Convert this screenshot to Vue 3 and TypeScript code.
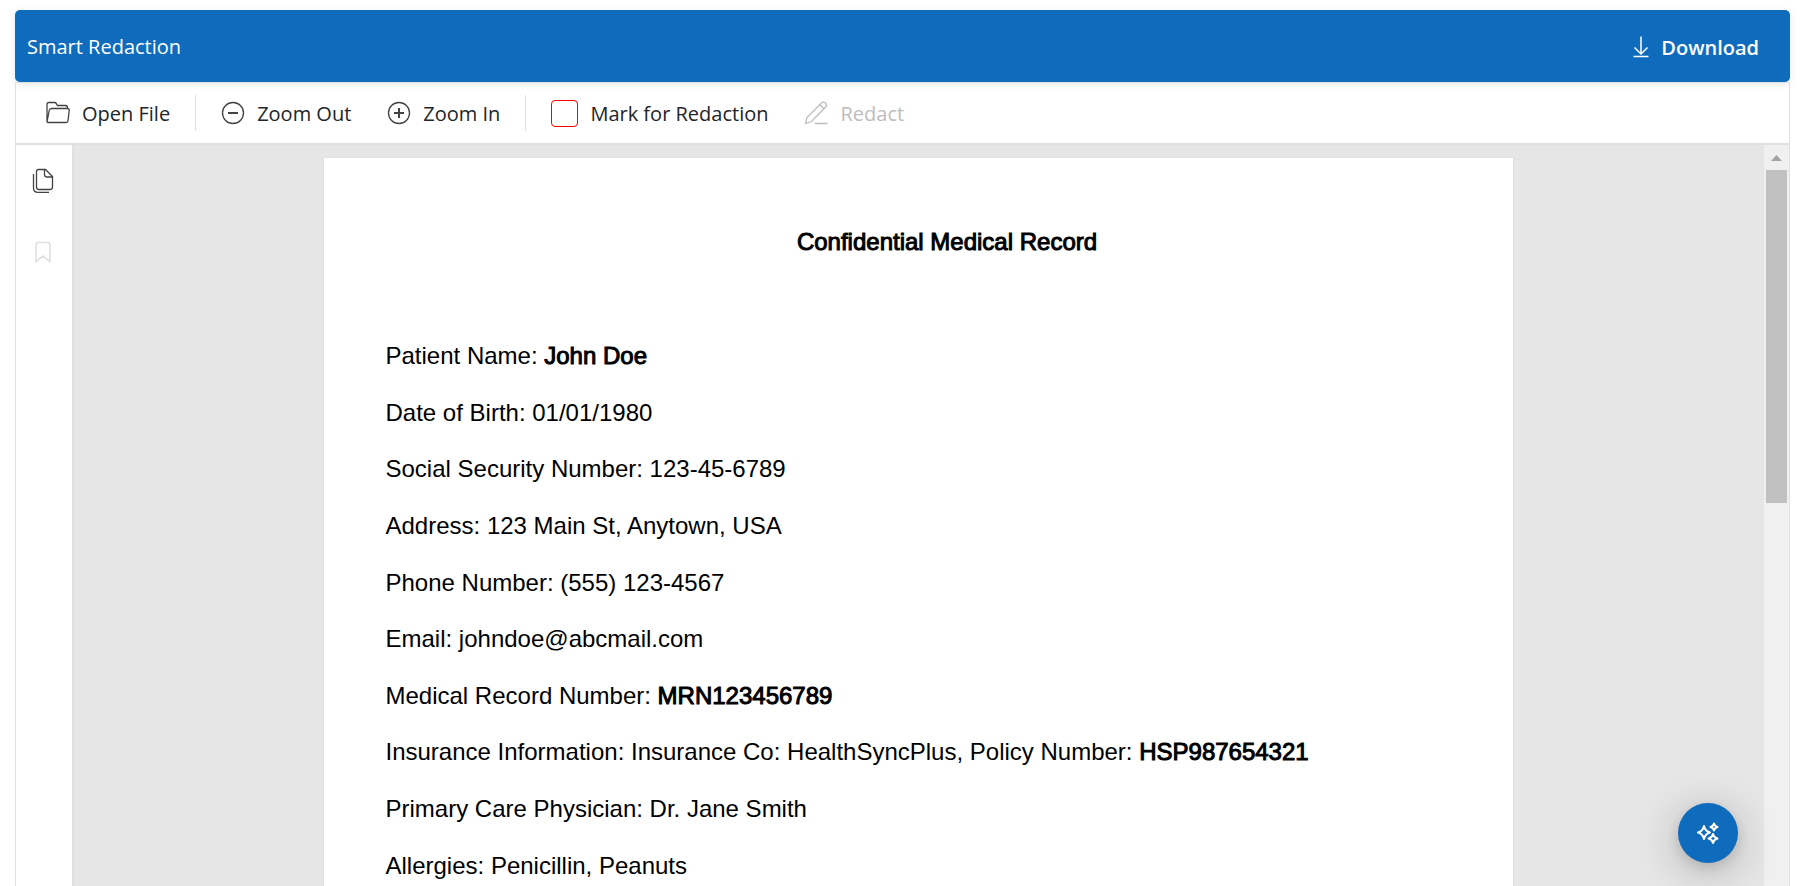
<script setup lang="ts">
interface RecordLine {
  label: string
  strong?: string
}

const title = 'Confidential Medical Record'

const lines: RecordLine[] = [
  { label: 'Patient Name:', strong: 'John Doe' },
  { label: 'Date of Birth: 01/01/1980' },
  { label: 'Social Security Number: 123-45-6789' },
  { label: 'Address: 123 Main St, Anytown, USA' },
  { label: 'Phone Number: (555) 123-4567' },
  { label: 'Email: johndoe@abcmail.com' },
  { label: 'Medical Record Number:', strong: 'MRN123456789' },
  {
    label: 'Insurance Information: Insurance Co: HealthSyncPlus, Policy Number:',
    strong: 'HSP987654321',
  },
  { label: 'Primary Care Physician: Dr. Jane Smith' },
  { label: 'Allergies: Penicillin, Peanuts' },
]
</script>

<template>
  <div class="app">
    <header class="header">
      <h1 class="app-title">Smart Redaction</h1>
      <button type="button" class="download">
        <svg class="icon-download" viewBox="0 0 16 22" aria-hidden="true">
          <path d="M8 0.5V17M1.5 11.5L8 18l6.5-6.5M0.5 20.5h15" />
        </svg>
        Download
      </button>
    </header>

    <div class="viewer">
      <div class="toolbar" role="toolbar" aria-label="Document tools">
        <button type="button" class="tool">
          <svg class="icon" viewBox="0 0 24 24" aria-hidden="true">
            <path d="M1 20.500V3.500Q1 1.500 3 1.500H8.500Q9.500 1.500 10.200 2.300L11.500 4.500H19.500Q21.500 4.500 21.500 7V7.500M1 21L3.200 9.500Q3.600 7.500 5.600 7.500H21.500Q23.400 7.500 23.200 9.300L22 19.700Q21.800 21.500 20 21.500H2Q1 21.500 1 20.500" />
          </svg>
          <span class="tool-text">Open File</span>
        </button>
        <span class="separator"></span>
        <button type="button" class="tool">
          <svg class="icon" viewBox="0 0 24 24" aria-hidden="true">
            <circle cx="12" cy="12" r="10.5" />
            <path class="sign" d="M7 12h10" />
          </svg>
          <span class="tool-text">Zoom Out</span>
        </button>
        <button type="button" class="tool">
          <svg class="icon" viewBox="0 0 24 24" aria-hidden="true">
            <circle cx="12" cy="12" r="10.5" />
            <path class="sign" d="M7 12h10M12 7v10" />
          </svg>
          <span class="tool-text">Zoom In</span>
        </button>
        <span class="separator"></span>
        <label class="tool">
          <input type="checkbox" class="mark" />
          <span class="tool-text">Mark for Redaction</span>
        </label>
        <button type="button" class="tool" disabled>
          <svg class="icon" viewBox="0 0 24 24" aria-hidden="true">
            <path d="M1.500 22.500L3 16.500L17.500 2Q19.500 0.300 21.500 2Q23.400 4 21.700 6L7.500 20.500ZM16 3.700L20 7.700M11 22.500H23.500" />
          </svg>
          <span class="tool-text">Redact</span>
        </button>
      </div>

      <div class="body">
        <nav class="rail" aria-label="Panels">
          <button type="button" class="rail-button" aria-label="Page thumbnails">
            <svg class="icon" viewBox="0 0 24 24" aria-hidden="true">
              <path d="M7.500 0.500H14.500L21.500 7.500V18Q21.500 20.500 19 20.500H8Q5.500 20.500 5.500 18V2.500Q5.500 0.500 7.500 0.500ZM13.500 0.500V5.500Q13.500 8 16 8H21.500M2.500 5V19Q2.500 23.300 7 23.300H18" />
            </svg>
          </button>
          <button type="button" class="rail-button" aria-label="Bookmarks" disabled>
            <svg class="icon" viewBox="0 0 24 24" aria-hidden="true">
              <path d="M5 20.500V4Q5 1.500 7.500 1.500H16.500Q19 1.500 19 4V20.500L12 15Z" />
            </svg>
          </button>
        </nav>

        <main class="canvas">
          <article class="page">
            <h2 class="page-title">{{ title }}</h2>
            <div class="record">
              <p v-for="line in lines" :key="line.label">
                {{ line.label }} <strong v-if="line.strong">{{ line.strong }}</strong>
              </p>
            </div>
          </article>
        </main>

        <div class="scrollbar" aria-hidden="true">
          <svg class="arrow" viewBox="0 0 11 6"><path d="M0 6L5.500 0L11 6Z" /></svg>
          <div class="thumb"></div>
        </div>
      </div>
    </div>

    <button type="button" class="assistant" aria-label="AI assistant">
      <svg viewBox="0 0 24 24" aria-hidden="true">
        <path d="M8 5Q9.200 10.300 14 11.500Q9.200 12.700 8 18Q6.800 12.700 2 11.500Q6.800 10.300 8 5Z" />
        <path d="M18 2.500Q18.700 5.400 21.500 6Q18.700 6.600 18 9.500Q17.300 6.600 14.500 6Q17.300 5.400 18 2.500Z" />
        <path d="M17 13Q17.900 16.800 21.500 17.500Q17.900 18.300 17 22Q16.100 18.300 12.500 17.500Q16.100 16.800 17 13Z" />
      </svg>
    </button>
  </div>
</template>

<style>
body {
  margin: 0;
  background: #fff;
}
</style>

<style scoped>
.app {
  box-sizing: border-box;
  height: 100vh;
  padding: 10px 29px 0 15px;
  overflow: hidden;
  display: flex;
  flex-direction: column;
  font-family: "Open Sans", "Noto Sans", sans-serif;
  color: #212529;
}

button {
  border: 0;
  background: none;
  padding: 0;
  font: inherit;
  color: inherit;
}

svg {
  fill: none;
  stroke: currentColor;
  overflow: visible;
}

.header {
  flex: none;
  height: 72px;
  box-sizing: border-box;
  padding: 0 31px 0 12px;
  display: flex;
  align-items: center;
  justify-content: space-between;
  border-radius: 5px;
  background: #0f6cbd;
  color: #fff;
  box-shadow: 0 2px 8px rgba(0, 0, 0, 0.1);
}

.app-title {
  margin: 0;
  font-size: 20px;
  font-weight: 400;
}

.download {
  display: flex;
  align-items: center;
  gap: 12px;
  padding-top: 2px;
  font-size: 20px;
  font-weight: 600;
}

.icon-download {
  width: 16px;
  height: 22px;
  stroke-width: 1.5;
}

.viewer {
  flex: 1;
  min-height: 0;
  display: flex;
  flex-direction: column;
  border: 1px solid #e0e0e0;
  border-bottom: 0;
}

.toolbar {
  flex: none;
  height: 60px;
  padding: 0 12px;
  display: flex;
  align-items: center;
  border-bottom: 2px solid #e0e0e0;
}

.tool {
  display: flex;
  align-items: center;
  gap: 12px;
  padding: 0 18px;
  font-size: 20px;
  line-height: 28px;
  white-space: nowrap;
}

.tool-text {
  padding-top: 2px;
}

.tool:disabled {
  color: #bdbdbd;
}

.icon {
  width: 24px;
  height: 24px;
  stroke: #424242;
  stroke-width: 1.3;
}

.tool:disabled .icon {
  stroke: #bdbdbd;
}

.sign {
  stroke-width: 2;
}

.separator {
  width: 1px;
  height: 36px;
  margin: 0 7px;
  background: #e0e0e0;
}

.mark {
  appearance: none;
  box-sizing: border-box;
  width: 27px;
  height: 27px;
  margin: 0;
  border: 1px solid #f00;
  border-radius: 4px;
  background: #fff;
}

.body {
  flex: 1;
  min-height: 0;
  display: flex;
}

.rail {
  flex: none;
  width: 56px;
  border-right: 2px solid #e0e0e0;
}

.rail-button {
  display: flex;
  align-items: center;
  justify-content: center;
  width: 54px;
  height: 72px;
}

.rail-button:disabled .icon {
  stroke: #e0e0e0;
  stroke-width: 1.6;
}

.canvas {
  flex: 1;
  min-width: 0;
  padding: 12px 2px 0 0;
  overflow: hidden;
  background: #e6e6e6;
}

.page {
  box-sizing: border-box;
  width: 1191px;
  max-width: 100%;
  margin: 0 auto;
  padding: 68px 62px;
  border: 1px solid #e0e0e0;
  background: #fff;
  color: #000;
  font-family: "Liberation Sans", Arial, sans-serif;
  font-size: 24px;
  line-height: 32px;
}

.page-title {
  margin: 0 0 70px;
  padding-left: 58px;
  font-size: 24px;
  font-weight: 400;
  text-align: center;
  -webkit-text-stroke: 1px #000;
}

.record {
  display: grid;
  grid-template-rows: repeat(10, 1fr);
  align-items: center;
  height: 566px;
}

.record p {
  margin: 0;
}

.record strong {
  font-weight: 400;
  -webkit-text-stroke: 1px #000;
}

.scrollbar {
  flex: none;
  width: 25px;
  display: flex;
  flex-direction: column;
  align-items: center;
  background: #f0f0f0;
}

.arrow {
  width: 11px;
  height: 6px;
  padding: 10px 0 9px;
  fill: #a3a3a3;
  stroke: none;
}

.thumb {
  width: 21px;
  height: 45%;
  background: #c1c1c1;
}

.assistant {
  position: absolute;
  right: 81px;
  bottom: 23px;
  width: 60px;
  height: 60px;
  display: flex;
  align-items: center;
  justify-content: center;
  border-radius: 50%;
  background: #0f6cbd;
  color: #fff;
  box-shadow: 0 8px 44px rgba(0, 0, 0, 0.24), 0 4px 12px rgba(0, 0, 0, 0.12);
}

.assistant svg {
  width: 24px;
  height: 24px;
  stroke-width: 2;
  stroke-linejoin: round;
}
</style>
